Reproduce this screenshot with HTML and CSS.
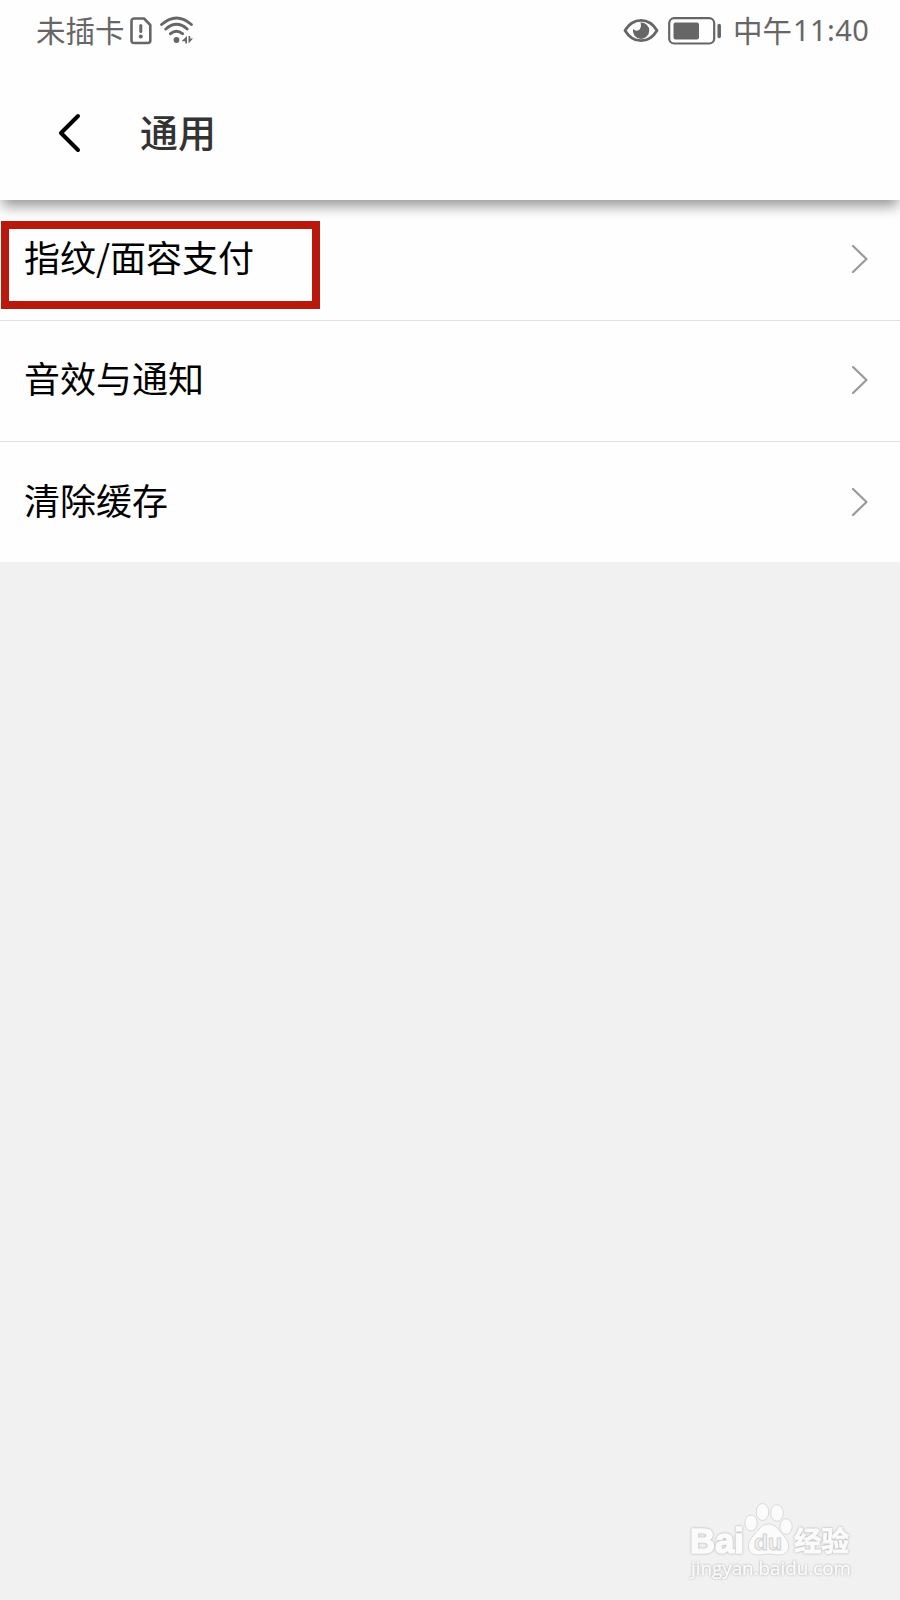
FILE: index.html
```
<!DOCTYPE html>
<html lang="zh-CN">
<head>
<meta charset="utf-8">
<title>通用</title>
<link rel="stylesheet" href="styles.css">
</head>
<body>
<header class="top">
  <div class="status">
    <span class="carrier">未插卡</span>
    <svg class="sim" width="22" height="28" viewBox="0 0 22 28" fill="none" stroke="#666" stroke-width="2.6" stroke-linejoin="round" stroke-linecap="round"><path d="M4.5 1.5H14L20.3 8V23.5Q20.3 26 17.8 26H4Q1.5 26 1.5 23.5V4Q1.5 1.5 4.5 1.5Z"/><path d="M10.8 8.5V14.5" stroke-width="3"/><circle cx="10.8" cy="19.5" r="2" fill="#666" stroke="none"/></svg>
    <svg class="wifi" width="34" height="30" viewBox="0 0 34 30" fill="none" stroke="#666" stroke-width="2.9" stroke-linecap="round"><path d="M1.6 8.5Q16.5-4.5 31.4 8.5M5.8 13Q16.5 3.7 27.2 13M10.5 17.7Q16.5 12.7 22.5 17.7"/><circle cx="16.5" cy="24" r="2.9" fill="#666" stroke="none"/><path d="M27 20V27.5H25.3V25.3H21.5ZM28.5 20V27.5L33 22.5H30.2V20Z" fill="#666" stroke="none"/></svg>
    <div class="right">
      <svg class="eye" width="36" height="26" viewBox="0 0 36 26" fill="none" stroke="#666" stroke-width="2.8"><path d="M2 12.5Q8 2.3 18 2.3T34 12.5Q28 22.7 18 22.7T2 12.5Z" stroke-linejoin="round"/><path d="M17.5 4.5A8.2 8.2 0 1 1 10 11.1Q14.2 14.5 17 11Q18.8 8 17.5 4.5Z" fill="#666" stroke="none"/></svg>
      <svg class="battery" width="54" height="28" viewBox="0 0 54 28" fill="none" stroke="#666"><rect x="1.2" y="1.2" width="45" height="25.3" rx="5" stroke-width="2.2"/><rect x="5.5" y="5.5" width="25.5" height="17" rx="2" fill="#666" stroke="none"/><path d="M51.2 8.5V19.5" stroke-width="3.5" stroke-linecap="round"/></svg>
      <span class="clock"><span>中午</span><span class="digits">11:40</span></span>
    </div>
  </div>
  <div class="bar">
    <svg class="back" width="24" height="40" viewBox="0 0 24 40" fill="none" stroke="#000" stroke-width="4" stroke-linecap="round" stroke-linejoin="round"><path d="M20 3L3 20L20 37"/></svg>
    <h1 class="title">通用</h1>
  </div>
</header>
<main class="list">
  <div class="row marked"><span class="label">指纹/面容支付</span><svg class="go" width="18" height="30" viewBox="0 0 18 30"><path d="M2 2L15.5 15L2 28"/></svg></div>
  <div class="row"><span class="label">音效与通知</span><svg class="go" width="18" height="30" viewBox="0 0 18 30"><path d="M2 2L15.5 15L2 28"/></svg></div>
  <div class="row"><span class="label">清除缓存</span><svg class="go" width="18" height="30" viewBox="0 0 18 30"><path d="M2 2L15.5 15L2 28"/></svg></div>
</main>
<svg class="watermark" width="180" height="90" viewBox="0 0 180 90" fill="#fbfbfb" stroke="#fbfbfb">
  <g class="paw" transform="translate(10 0)"><ellipse cx="72.5" cy="22" rx="6.3" ry="8.5"/><ellipse cx="87" cy="23" rx="6.3" ry="8.3"/><ellipse cx="61" cy="33" rx="6.2" ry="8"/><ellipse cx="96" cy="36.5" rx="6.2" ry="7.8"/>
  <path d="M78.5 34C85 34 88 39 94 46C102 55 99 65 89 65C84 65 82 64 78.5 64C75 64 73 65 68 65C58 65 55 55 63 46C69 39 72 34 78.5 34Z"/></g>
  <text class="wm-bold" x="10" y="63" font-size="35" textLength="54" lengthAdjust="spacingAndGlyphs">Bai</text>
  <text class="wm-bold wm-du" x="74" y="60" font-size="22" textLength="28" lengthAdjust="spacingAndGlyphs">du</text>
  <text class="wm-bold wm-cn" x="114" y="61" font-size="27" textLength="55" lengthAdjust="spacingAndGlyphs">经验</text>
  <text class="wm-url" x="11" y="85" font-size="18.5" textLength="160" lengthAdjust="spacingAndGlyphs">jingyan.baidu.com</text>
</svg>
</body>
</html>
```
FILE: styles.css
```
*, *::before { box-sizing: border-box; }
body {
  margin: 0;
  min-height: 1600px;
  background: #f1f1f1;
  font-family: "Noto Sans CJK SC", sans-serif;
  color: #000;
}
.top {
  position: relative;
  z-index: 1;
  height: 200px;
  background: #fefefe;
  box-shadow: 0 8px 13px -2px rgba(0, 0, 0, .42);
}
.status {
  display: flex;
  align-items: center;
  height: 62px;
  padding: 0 29px 0 36px;
  color: #666;
  font-size: 29.5px;
  line-height: 44px;
}
.carrier { width: 94px; padding-bottom: 4px; white-space: nowrap; }
.sim { margin-bottom: 1px; }
.wifi { margin-left: 8px; }
.right { display: flex; align-items: center; margin-left: auto; }
.battery { margin: 0 0 1px 9px; }
.clock { display: flex; width: 138px; margin-left: 11px; padding-bottom: 4px; white-space: nowrap; }
.digits { margin: 1px 0 -1px 1px; font-family: "Noto Sans", sans-serif; font-size: 29px; letter-spacing: .4px; }
.bar { display: flex; align-items: center; height: 142px; padding-left: 58px; }
.back { margin-bottom: 1px; }
.title {
  margin: 0 0 5px 58px;
  color: #333;
  font-size: 38px;
  font-weight: 500;
  line-height: 56px;
}
.row {
  display: flex;
  align-items: center;
  justify-content: space-between;
  height: 121px;
  padding: 0 31px 2px 24px;
  background: #fefefe;
  border-bottom: 1px solid #e0e0e0;
  font-size: 36px;
  line-height: 54px;
}
.row:last-child { height: 120px; padding-bottom: 0; border-bottom: 0; }
.label { padding-bottom: 7px; }
.go { fill: none; stroke: #999; stroke-width: 2.2; stroke-linecap: round; stroke-linejoin: round; }
.marked { position: relative; }
.marked::before {
  content: "";
  position: absolute;
  left: 1px;
  top: 21px;
  width: 319px;
  height: 88px;
  border: 8px solid #b9190c;
}
.watermark { position: absolute; left: 680px; top: 1490px; }
.paw { stroke: #dadada; }
.wm-bold {
  font-family: "Liberation Sans", sans-serif;
  font-weight: 700;
  stroke-width: 1.6;
  filter: drop-shadow(0 0 1px #aaa);
}
.wm-du { fill: #f3f3f3; stroke: #d2d2d2; stroke-width: 1; filter: none; }
.wm-cn { font-family: "Noto Sans CJK SC", sans-serif; stroke-width: .8; }
.wm-url { font-family: "Open Sans", sans-serif; stroke-width: .3; filter: drop-shadow(0 0 1px #aaa); }
```
